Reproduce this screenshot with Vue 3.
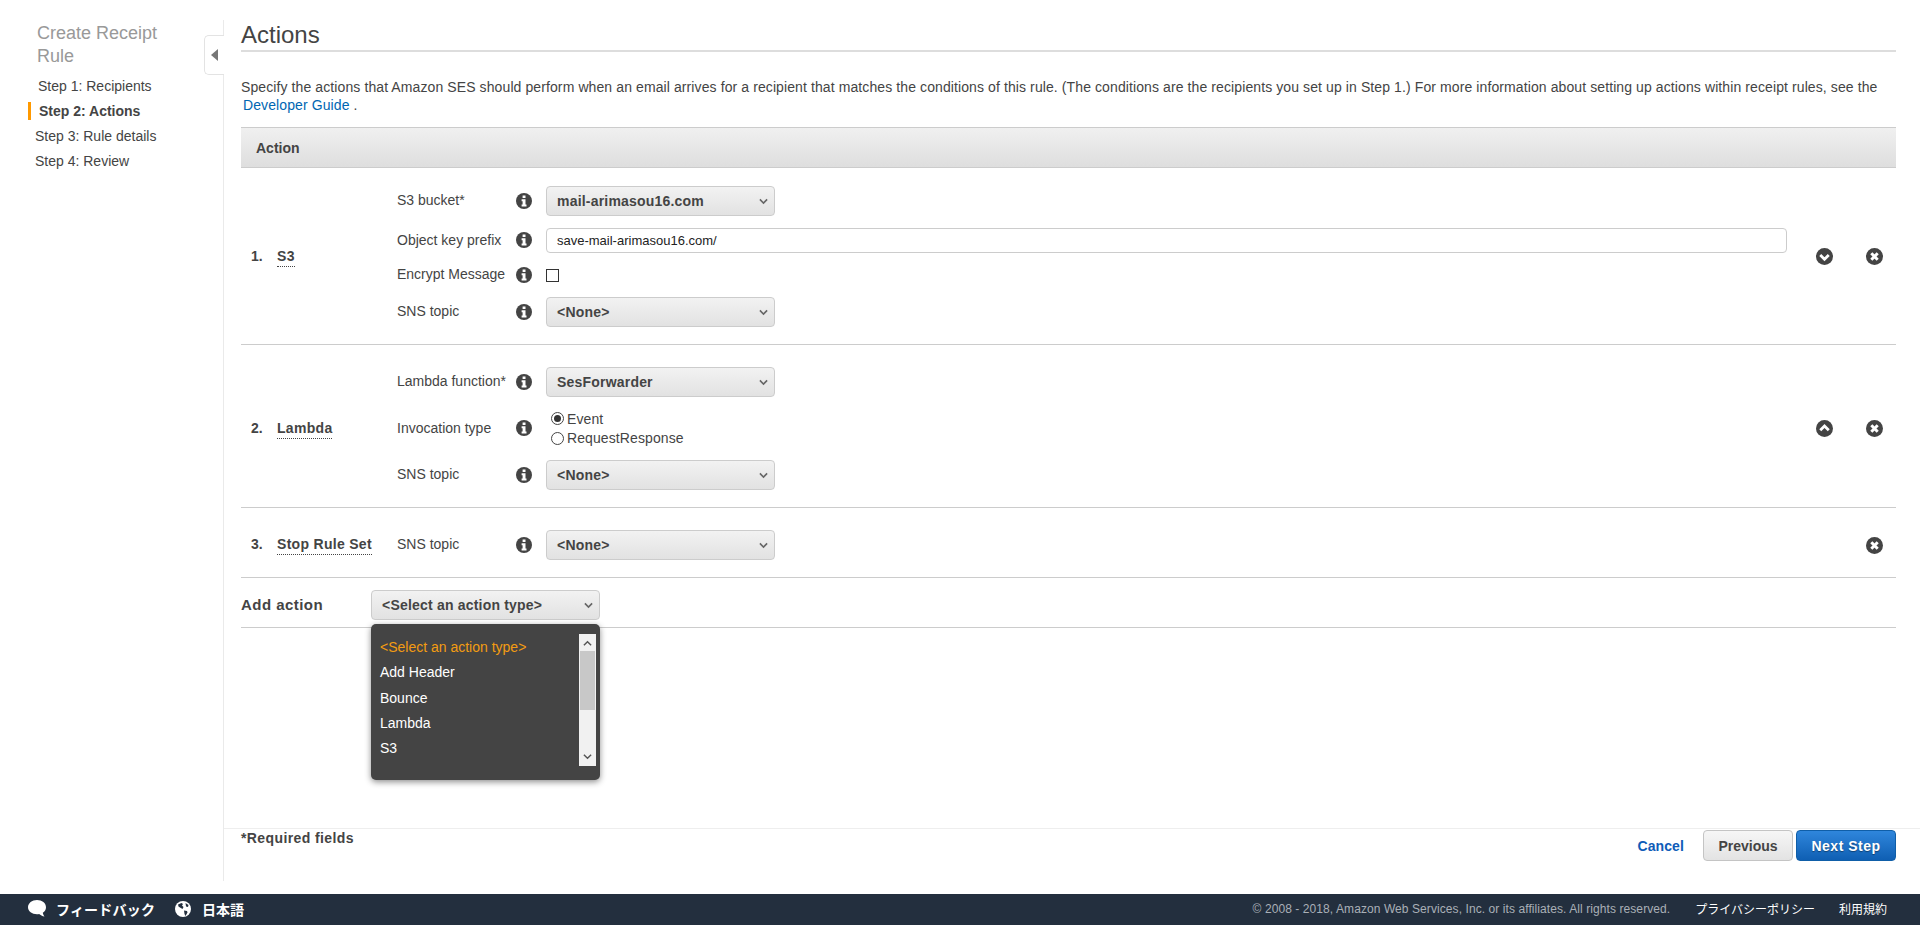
<script setup>
const steps = [
  { label: 'Step 1: Recipients', cls: 's1' },
  { label: 'Step 2: Actions', cls: 's2' },
  { label: 'Step 3: Rule details', cls: 's3' },
  { label: 'Step 4: Review', cls: 's3' },
]
const actions = [
  {
    n: '1.', name: 'S3', move: 'down',
    fields: [
      { label: 'S3 bucket*', type: 'select', value: 'mail-arimasou16.com' },
      { label: 'Object key prefix', type: 'input', value: 'save-mail-arimasou16.com/' },
      { label: 'Encrypt Message', type: 'check' },
      { label: 'SNS topic', type: 'select', value: '<None>' },
    ],
  },
  {
    n: '2.', name: 'Lambda', move: 'up',
    fields: [
      { label: 'Lambda function*', type: 'select', value: 'SesForwarder' },
      { label: 'Invocation type', type: 'radio' },
      { label: 'SNS topic', type: 'select', value: '<None>' },
    ],
  },
  {
    n: '3.', name: 'Stop Rule Set', move: null,
    fields: [{ label: 'SNS topic', type: 'select', value: '<None>' }],
  },
]
const options = ['<Select an action type>', 'Add Header', 'Bounce', 'Lambda', 'S3']
</script>

<template>
  <div class="page">
    <div class="body">
      <aside class="side">
        <h2 class="side-title">Create Receipt Rule</h2>
        <ul class="steps">
          <li v-for="s in steps" :key="s.label" :class="s.cls">{{ s.label }}</li>
        </ul>
        <div class="toggle"><span class="tri"></span></div>
      </aside>

      <main class="main">
        <div class="content">
          <h1 class="title">Actions</h1>
          <p class="intro">
            Specify the actions that Amazon SES should perform when an email arrives for a recipient that matches the conditions of this rule. (The conditions are the recipients you set up in Step 1.) For more information about setting up actions within receipt rules, see the
            <a class="guide">Developer Guide</a> .
          </p>
          <div class="thead">Action</div>

          <div v-for="a in actions" :key="a.n" class="row">
            <div class="num">{{ a.n }}</div>
            <div class="name"><span>{{ a.name }}</span></div>
            <div class="fields">
              <div v-for="f in a.fields" :key="f.label" class="field" :class="'f-' + f.type">
                <label class="flabel">{{ f.label }}</label>
                <svg class="info" viewBox="0 0 16 16">
                  <circle cx="8" cy="8" r="8" fill="#444" />
                  <path d="M6.6 2.6h2.9v2.4H6.6zM5.6 6.2h3.9v5.4h1v2H5.6v-2h1V8.2h-1z" fill="#fff" />
                </svg>
                <div v-if="f.type === 'select'" class="select">
                  <span>{{ f.value }}</span>
                  <svg class="chev" viewBox="0 0 10 7"><path d="M1 1.2 5 5.2l4-4" fill="none" stroke="#666" stroke-width="1.8" /></svg>
                </div>
                <input v-else-if="f.type === 'input'" class="text" :value="f.value" />
                <span v-else-if="f.type === 'check'" class="check"></span>
                <div v-else class="radios">
                  <div class="radio"><span class="dot on"></span>Event</div>
                  <div class="radio"><span class="dot"></span>RequestResponse</div>
                </div>
              </div>
            </div>
            <div class="ops">
              <svg v-if="a.move" class="op" viewBox="0 0 16 16">
                <circle cx="8" cy="8" r="8" fill="#444" />
                <path :d="a.move === 'down' ? 'M4 6.6 8 10.6l4-4' : 'M4 9.6 8 5.6l4 4'" fill="none" stroke="#fff" stroke-width="2.6" />
              </svg>
              <svg class="op" viewBox="0 0 16 16">
                <circle cx="8" cy="8" r="8" fill="#444" />
                <path d="M5 5l6 6M11 5l-6 6" fill="none" stroke="#fff" stroke-width="2.8" />
              </svg>
            </div>
          </div>

          <div class="add">
            <div class="add-label">Add action</div>
            <div class="select add-select">
              <span>&lt;Select an action type&gt;</span>
              <svg class="chev" viewBox="0 0 10 7"><path d="M1 1.2 5 5.2l4-4" fill="none" stroke="#666" stroke-width="1.8" /></svg>
            </div>
            <div class="menu">
              <ul class="menu-list">
                <li v-for="(o, i) in options" :key="o" :class="{ sel: i === 0 }">{{ o }}</li>
              </ul>
              <div class="bar">
                <svg class="arr" viewBox="0 0 10 7"><path d="M1 5.5 5 1.5l4 4" fill="none" stroke="#555" stroke-width="1.6" /></svg>
                <div class="thumb"></div>
                <svg class="arr arr-b" viewBox="0 0 10 7"><path d="M1 1.5 5 5.5l4-4" fill="none" stroke="#555" stroke-width="1.6" /></svg>
              </div>
            </div>
          </div>
        </div>

        <div class="actions-bar">
          <span class="req">*Required fields</span>
          <div class="btns">
            <a class="cancel">Cancel</a>
            <button class="btn prev">Previous</button>
            <button class="btn next">Next Step</button>
          </div>
        </div>
      </main>
    </div>

    <footer class="foot">
      <div class="foot-l">
        <svg class="bubble" viewBox="0 0 18 17">
          <path d="M9 0c5 0 9 3 9 7.2 0 2.400-1.300 4.300-3.200 5.500.2 1.500.9 2.800 1.700 3.800-2.200-.3-4-1.400-5.400-2.500-.7.1-1.400.2-2.100.2-5 0-9-3-9-7S4 0 9 0z" fill="#fff" />
        </svg>
        <span class="fb">フィードバック</span>
        <svg class="globe" viewBox="0 0 16 16">
          <circle cx="8" cy="8" r="8" fill="#fff" />
          <path d="M3 3.500 6.500 2l1.500 1-1 1.500 1.500 1.500-1 2L5 6.500 3.500 5.500zM9 9.500l3 .5.5 1.500L10.500 15 9.500 13zM10.500 2l3 2-.5 2-2-.5z" fill="#232f3e" />
        </svg>
        <span class="lang">日本語</span>
      </div>
      <div class="foot-r">
        <span class="copy">© 2008 - 2018, Amazon Web Services, Inc. or its affiliates. All rights reserved.</span>
        <span class="flink">プライバシーポリシー</span>
        <span class="flink">利用規約</span>
      </div>
    </footer>
  </div>
</template>

<style>
html, body { margin: 0; background: #fff; }
</style>

<style scoped>
.page {
  height: 925px;
  display: flex;
  flex-direction: column;
  font-family: "Liberation Sans", Arial, "Noto Sans CJK JP", sans-serif;
  font-size: 14px;
  color: #444;
  overflow: hidden;
}
.body {
  flex: 1;
  display: flex;
  padding-top: 20px;
  padding-bottom: 13px;
  min-height: 0;
}
.side {
  width: 224px;
  box-sizing: border-box;
  border-right: 1px solid #eaeaea;
  position: relative;
  flex: none;
}
.side-title {
  margin: 0;
  padding: 2px 40px 0 37px;
  font-size: 18px;
  line-height: 23px;
  font-weight: 400;
  color: #999;
}
.steps {
  list-style: none;
  margin: 6px 0 0;
  padding: 0;
  line-height: 25px;
  height: 100px;
}
.steps li { position: relative; font-size: 14px; }
.s1 { padding-left: 38px; }
.s2 { padding-left: 39px; font-weight: 700; }
.s2::before {
  content: "";
  position: absolute;
  left: 28px;
  top: 3px;
  width: 3px;
  height: 18px;
  background: #f90;
}
.s3 { padding-left: 35px; }
.toggle {
  position: absolute;
  right: -1px;
  top: 15px;
  width: 20px;
  height: 40px;
  box-sizing: border-box;
  border: 1px solid #e3e3e3;
  border-right: 0;
  border-radius: 5px 0 0 5px;
  background: #fff;
  display: flex;
  align-items: center;
  justify-content: center;
}
.tri {
  width: 0;
  height: 0;
  border-style: solid;
  border-width: 6px 7px 6px 0;
  border-color: transparent #777 transparent transparent;
}
.main {
  flex: 1;
  min-width: 0;
  display: flex;
  flex-direction: column;
}
.content {
  flex: 1;
  padding: 0 24px 0 17px;
}
.title {
  margin: 0;
  font-size: 24px;
  font-weight: 400;
  line-height: 30px;
  height: 30px;
  border-bottom: 2px solid #ddd;
  color: #444;
}
.intro {
  margin: 26px 0 0;
  font-size: 14px;
  line-height: 18px;
  letter-spacing: .1px;
  color: #444;
}
.guide { color: #0066b2; margin-left: 2px; }
.thead {
  margin-top: 13px;
  height: 41px;
  box-sizing: border-box;
  padding-left: 15px;
  line-height: 40px;
  font-weight: 700;
  font-size: 14px;
  color: #444;
  background: linear-gradient(#f0f0f0, #dedede);
  border-top: 1px solid #ccc;
  border-bottom: 1px solid #ccc;
}
.row {
  display: flex;
  align-items: center;
  padding: 22px 0 17px 10px;
  border-bottom: 1px solid #ccc;
}
.thead + .row { padding-top: 18px; }
.num { width: 26px; flex: none; font-weight: 700; font-size: 14px; margin-top: -2px; }
.name { width: 120px; flex: none; font-weight: 700; font-size: 14px; letter-spacing: .3px; margin-top: -2px; }
.name span { border-bottom: 1px dotted #444; padding-bottom: 2px; }
.fields {
  flex: 1;
  display: flex;
  flex-direction: column;
  gap: 12px;
  min-width: 0;
}
.field {
  display: flex;
  align-items: center;
}
.flabel {
  width: 119px;
  flex: none;
  font-size: 14px;
  color: #444;
  margin-top: -2px;
}
.info {
  width: 16px;
  height: 16px;
  flex: none;
  margin-right: 14px;
  margin-top: -1px;
}
.select {
  width: 229px;
  height: 30px;
  box-sizing: border-box;
  border: 1px solid #ccc;
  border-radius: 4px;
  background: linear-gradient(#f2f2f2, #e2e2e2);
  display: flex;
  align-items: center;
  justify-content: space-between;
  padding: 0 6px 0 10px;
  font-weight: 700;
  font-size: 14px;
  letter-spacing: .2px;
  color: #444;
}
.chev { width: 9px; height: 7px; flex: none; }
.text {
  flex: 1;
  min-width: 0;
  height: 25px;
  box-sizing: border-box;
  border: 1px solid #ccc;
  border-radius: 4px;
  padding: 0 10px;
  font: 13px "Liberation Sans", Arial, sans-serif;
  color: #222;
  outline: none;
}
.f-check { height: 20px; }
.check {
  width: 11px;
  height: 11px;
  border: 1px solid #333;
  background: #fff;
  margin-top: 1px;
}
.radios { margin-left: 5px; }
.radio {
  display: flex;
  align-items: center;
  height: 19.500px;
  font-size: 14px;
  letter-spacing: .1px;
}
.dot {
  width: 11px;
  height: 11px;
  border: 1px solid #444;
  border-radius: 50%;
  margin-right: 3px;
  position: relative;
  background: #fff;
}
.dot.on::after {
  content: "";
  position: absolute;
  inset: 2px;
  border-radius: 50%;
  background: #333;
}
.ops {
  width: 109px;
  flex: none;
  box-sizing: border-box;
  padding-right: 13px;
  display: flex;
  justify-content: flex-end;
  gap: 33px;
}
.op { width: 17px; height: 17px; }
.add {
  position: relative;
  display: flex;
  align-items: center;
  padding: 12px 0 7px;
  border-bottom: 1px solid #ccc;
}
.add-label {
  width: 130px;
  font-weight: 700;
  font-size: 15px;
  letter-spacing: .45px;
  margin-top: -2px;
}
.menu {
  position: absolute;
  left: 130px;
  top: 46px;
  width: 229px;
  height: 156px;
  box-sizing: border-box;
  background: #444;
  border-radius: 5px;
  box-shadow: 0 2px 6px rgba(0, 0, 0, .45);
  padding: 10px 4px 14px 9px;
  display: flex;
  justify-content: space-between;
}
.menu-list {
  list-style: none;
  margin: 1px 0 0;
  padding: 0;
  font-size: 14px;
  line-height: 25.300px;
  color: #fff;
}
.menu-list li.sel { color: #f39c12; }
.bar {
  width: 17px;
  background: #f1f1f1;
  position: relative;
}
.thumb {
  position: absolute;
  left: 1px;
  right: 1px;
  top: 17px;
  height: 59px;
  background: #c8c8c8;
}
.arr { position: absolute; left: 4px; top: 6px; width: 9px; height: 7px; }
.arr-b { top: auto; bottom: 6px; }
.actions-bar {
  display: flex;
  justify-content: space-between;
  align-items: flex-start;
  height: 53px;
  box-sizing: border-box;
  border-top: 1px solid #eee;
  padding: 1px 24px 0 17px;
}
.req { font-weight: 700; font-size: 14px; line-height: 16px; letter-spacing: .4px; }
.btns { display: flex; align-items: center; gap: 3px; }
.cancel { color: #0f5cb8; font-weight: 700; font-size: 14px; letter-spacing: .1px; margin-right: 16px; }
.btn {
  height: 31px;
  box-sizing: border-box;
  border-radius: 4px;
  font: 700 14px "Liberation Sans", Arial, sans-serif;
  padding: 0;
}
.prev {
  width: 90px;
  border: 1px solid #c4c4c4;
  background: linear-gradient(#f6f6f6, #e3e3e3);
  color: #444;
}
.next {
  width: 100px;
  border: 1px solid #0f5ea8;
  background: linear-gradient(#2f86dc, #0f5fb3);
  color: #fff;
  letter-spacing: .5px;
  text-shadow: 0 1px 1px rgba(0, 0, 0, .4);
}
.foot {
  height: 31px;
  flex: none;
  background: #232f3e;
  display: flex;
  align-items: center;
  justify-content: space-between;
  padding: 0 33px 0 28px;
  color: #fff;
  font-size: 12px;
}
.foot-l, .foot-r { display: flex; align-items: center; margin-top: -2px; }
.bubble { width: 18px; height: 17px; margin-right: 10px; }
.fb { font-weight: 700; font-size: 14px; width: 119px; letter-spacing: .2px; }
.globe { width: 16px; height: 16px; margin-right: 11px; }
.lang { font-weight: 700; font-size: 14px; }
.copy { color: #aab0b7; font-size: 12px; letter-spacing: .08px; margin-right: 25px; }
.flink { font-size: 12px; }
.flink + .flink { margin-left: 24px; }
</style>
